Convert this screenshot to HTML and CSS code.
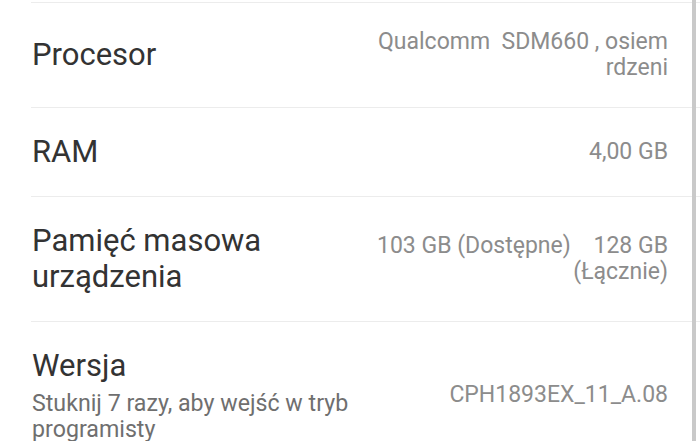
FILE: index.html
```html
<!DOCTYPE html>
<html lang="pl">
<head>
<meta charset="utf-8">
<title>Informacje o telefonie</title>
<link rel="stylesheet" href="styles.css">
</head>
<body>
<div class="screen">
  <ul class="list">
    <li class="row">
      <div class="label"><div class="title">Procesor</div></div>
      <div class="value">Qualcomm  SDM660 , osiem rdzeni</div>
    </li>
    <li class="row">
      <div class="label"><div class="title">RAM</div></div>
      <div class="value">4,00 GB</div>
    </li>
    <li class="row">
      <div class="label"><div class="title">Pamięć masowa urządzenia</div></div>
      <div class="value">103 GB (Dostępne)    128 GB (Łącznie)</div>
    </li>
    <li class="row">
      <div class="label">
        <div class="title">Wersja</div>
        <div class="subtitle">Stuknij 7 razy, aby wejść w tryb programisty</div>
      </div>
      <div class="value">CPH1893EX_11_A.08</div>
    </li>
  </ul>
  <div class="scrollbar"></div>
</div>
</body>
</html>
```
FILE: styles.css
```css
* { box-sizing: border-box; }
html, body {
  margin: 0;
  padding: 0;
  background: #ffffff;
  font-family: Roboto, "Noto Sans", "Liberation Sans", sans-serif;
}
.screen {
  position: relative;
  width: 700px;
  height: 441px;
  overflow: hidden;
  padding-top: 2px;
}
.list {
  list-style: none;
  margin: 0 0 0 31px;
  padding: 0;
}
.row {
  display: flex;
  align-items: center;
  justify-content: space-between;
  gap: 16px;
  border-top: 1px solid #ececec;
  padding: 26px 32px 26px 1px;
}
.label {
  flex: 1 1 auto;
  min-width: 0;
}
.title {
  font-size: 31px;
  line-height: 36px;
  color: #333333;
}
.subtitle {
  font-size: 23.2px;
  line-height: 26px;
  color: #6f6f6f;
  margin-top: 6px;
}
.value {
  flex: 0 1 auto;
  max-width: 300px;
  text-align: right;
  font-size: 23px;
  line-height: 26px;
  color: #8c8c8c;
  white-space: pre-wrap;
}
.scrollbar {
  position: absolute;
  top: 0;
  right: 4px;
  width: 4px;
  height: 441px;
  background: #c9c9c9;
}
```
